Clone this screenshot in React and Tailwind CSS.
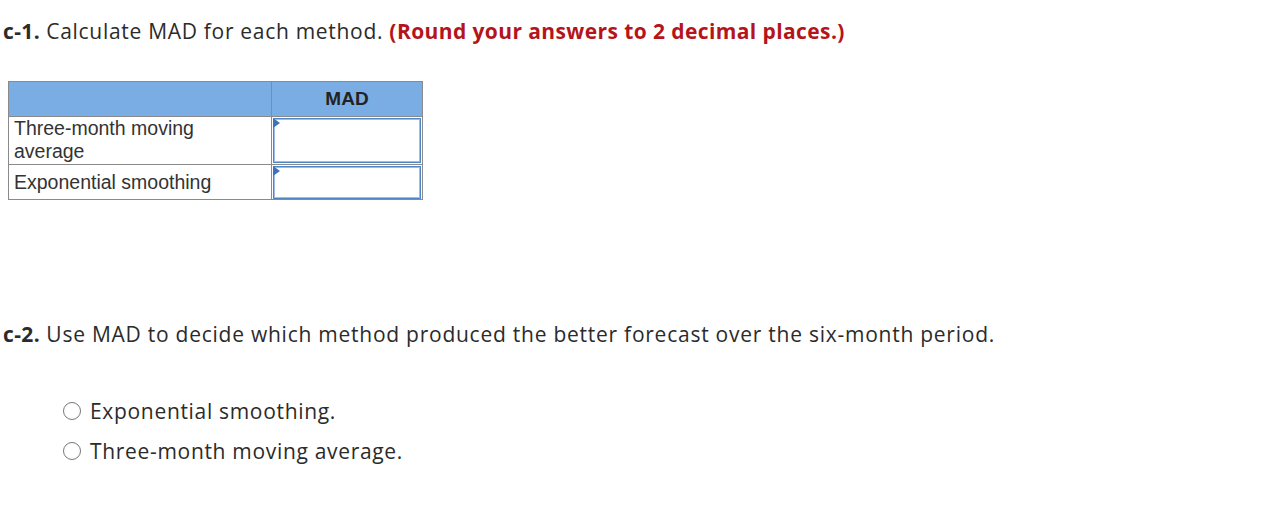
export default function App() {
  const prox = { fontFamily: '"Open Sans", Lato, sans-serif' };
  const arial = { fontFamily: '"Liberation Sans", Arial, sans-serif' };
  const Input = ({ h }) => (
    <div className={`relative ${h} border border-[#4f86c6] bg-white`}>
      <div className="absolute inset-0 border border-[#9dbde6]"></div>
      <div className="absolute left-[-1px] top-[-1px] w-0 h-0 border-t-[5px] border-b-[5px] border-l-[7px] border-t-transparent border-b-transparent border-l-[#3b74bd]"></div>
    </div>
  );
  return (
    <div className="w-[1274px] h-[521px] bg-white text-[#2b2b2b] overflow-hidden" style={prox}>
      <div className="pl-[3px] pt-[17px] text-[21px] leading-[28px] whitespace-nowrap tracking-[0.7px]">
        <span className="font-bold tracking-[0.4px]">c-1.</span> Calculate MAD for each method.{" "}
        <span className="font-bold text-[#b4141a] tracking-[0.4px]">(Round your answers to 2 decimal places.)</span>
      </div>
      <div className="ml-[8px] mt-[36px] w-[415px] border border-[#8a8a8a]" style={arial}>
        <div className="flex h-[35px] bg-[#7aade4] border-b border-[#8a8a8a]">
          <div className="w-[263px] border-r border-[#8a8a8a]"></div>
          <div className="flex-1 flex items-center justify-center font-bold text-[19px] text-[#222]">MAD</div>
        </div>
        <div className="flex border-b border-[#8a8a8a]">
          <div className="w-[263px] border-r border-[#8a8a8a] px-[5px] pt-[0px] text-[19.5px] leading-[23px] text-[#333]">
            Three-month moving<br />average
          </div>
          <div className="flex-1 p-[1px] pb-[1px]">
            <Input h="h-[45px]" />
          </div>
        </div>
        <div className="flex">
          <div className="w-[263px] border-r border-[#8a8a8a] px-[5px] py-[4px] text-[19.5px] leading-[26px] text-[#333]">
            Exponential smoothing
          </div>
          <div className="flex-1 p-[1px] pb-0">
            <Input h="h-[33px]" />
          </div>
        </div>
      </div>
      <div className="pl-[3px] mt-[120px] text-[21px] leading-[28px] whitespace-nowrap tracking-[0.75px]">
        <span className="font-bold tracking-[0.4px]">c-2.</span> Use MAD to decide which method produced the better forecast over the six-month period.
      </div>
      <div className="ml-[63px] mt-[49px] flex flex-col gap-[12px] text-[21px] leading-[28px] tracking-[0.68px]">
        {["Exponential smoothing.", "Three-month moving average."].map((t) => (
          <label key={t} className="flex items-center gap-[9px]">
            <span className="w-[18px] h-[18px] rounded-full border border-[#777] bg-white"></span>
            <span>{t}</span>
          </label>
        ))}
      </div>
    </div>
  );
}
